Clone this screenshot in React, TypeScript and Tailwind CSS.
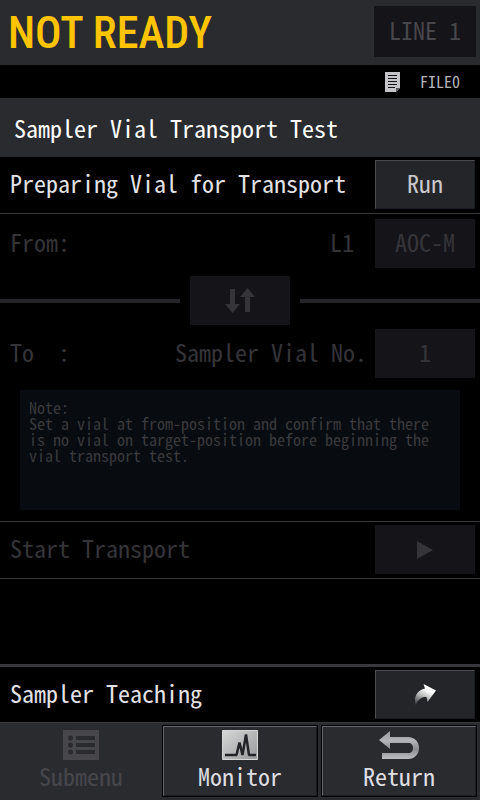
import React from 'react';
import { clsx } from 'clsx';

interface PanelButtonProps {
  children: React.ReactNode;
  label?: string;
  disabled?: boolean;
}

const PanelButton: React.FC<PanelButtonProps> = ({ children, label, disabled = false }) => (
  <button
    type="button"
    aria-label={label}
    disabled={disabled}
    className={clsx(
      'flex h-[49px] w-[100px] shrink-0 items-center justify-center border',
      disabled
        ? 'border-[#151418] bg-[#151418] text-[#353438]'
        : 'border-t-[#4c4c50] border-r-[#1a1a22] border-b-[#1a1a22] border-l-[#4c4c50] bg-[#242528] text-[#c8c8cc]'
    )}
  >
    {children}
  </button>
);

const ButtonText: React.FC<{ children: React.ReactNode }> = ({ children }) => (
  <span className="pb-1">{children}</span>
);

const DocumentIcon = () => (
  <svg width="15" height="20" viewBox="0 0 15 20" aria-hidden="true">
    <path d="M0 0h15v16l-4 4H0z" fill="#c4c4c8" />
    <path d="M11 20v-4h4z" fill="#55555a" />
    <path d="M3 3.5h9M3 6.5h9M3 9.5h9M3 12.5h9M3 15.5h7" stroke="#111" strokeWidth="1" />
  </svg>
);

const SwapIcon = () => (
  <svg width="30" height="26" viewBox="0 0 30 26" fill="#353438" aria-hidden="true">
    <path d="M5 1h5v15h5l-7.500 9L0 16h5z" />
    <path d="M20 24h5V9h5L22.500 0 15 9h5z" />
  </svg>
);

const PlayIcon = () => (
  <svg width="16" height="18" viewBox="0 0 16 18" fill="#353438" aria-hidden="true">
    <path d="M0 0l16 9-16 9z" />
  </svg>
);

const JumpIcon = () => (
  <svg width="22" height="22" viewBox="0 0 22 22" aria-hidden="true">
    <defs>
      <linearGradient id="jump" x1="0" y1="1" x2="0.5" y2="0">
        <stop offset="0" stopColor="#242528" />
        <stop offset="0.5" stopColor="#b8b8b8" />
        <stop offset="0.8" stopColor="#ffffff" />
      </linearGradient>
    </defs>
    <path d="M9.500 0L22 6.500 13.500 18l-1-5C8 12.500 4 15 1.500 21.500-.5 14 2.500 6 11 4.500z" fill="url(#jump)" />
  </svg>
);

const ListIcon = () => (
  <svg width="36" height="30" viewBox="0 0 36 30" aria-hidden="true">
    <path d="M0 0h36v30H0z" fill="#47474b" />
    <g fill="#2a2b2f">
      <circle cx="7.500" cy="8" r="2.500" />
      <circle cx="7.500" cy="15" r="2.500" />
      <circle cx="7.500" cy="22" r="2.500" />
      <path d="M13 6h19v4H13zM13 13h19v4H13zM13 20h19v4H13z" />
    </g>
  </svg>
);

const ChartIcon = () => (
  <svg width="36" height="30" viewBox="0 0 36 30" aria-hidden="true">
    <defs>
      <linearGradient id="chart" x1="0" y1="0" x2="1" y2="1">
        <stop offset="0" stopColor="#d4d8d6" />
        <stop offset="1" stopColor="#98999b" />
      </linearGradient>
    </defs>
    <path d="M.5.5h35v29H.5z" fill="url(#chart)" stroke="#d6d6d6" />
    <path
      d="M3 25h11.500l3-12.500 3 12.500 3.500-20.500L27 25h7"
      fill="none"
      stroke="#232428"
      strokeWidth="2.500"
      strokeLinejoin="bevel"
    />
  </svg>
);

const ReturnIcon = () => (
  <svg width="41" height="29" viewBox="0 0 41 29" aria-hidden="true">
    <defs>
      <linearGradient id="return" x1="0" y1="0" x2="0" y2="1">
        <stop offset="0" stopColor="#9a9b9d" />
        <stop offset="0.35" stopColor="#b4b5b7" />
        <stop offset="0.65" stopColor="#8c8d90" />
        <stop offset="1" stopColor="#bcbdbf" />
      </linearGradient>
    </defs>
    <path
      d="M0 9l11-9v6h18c7 0 11 5 11 11s-4 11-11 11H3v-6h26c3.500 0 5-2 5-5s-1.500-5-5-5H11v6z"
      fill="url(#return)"
    />
  </svg>
);

interface FooterButtonProps {
  icon: React.ReactNode;
  text: string;
  disabled?: boolean;
}

const FooterButton: React.FC<FooterButtonProps> = ({ icon, text, disabled = false }) => (
  <div className={clsx('flex-1 border', disabled ? 'border-[#2a2b2f]' : 'border-black')}>
    <button
      type="button"
      disabled={disabled}
      className={clsx(
        'flex h-[70px] w-full flex-col items-center border bg-[#2a2b2f] pt-[3px]',
        disabled
          ? 'border-[#2a2b2f] text-[#47474b]'
          : 'border-t-[#66666a] border-r-[#1c1c20] border-b-[#1c1c20] border-l-[#66666a] text-[#dedee2]'
      )}
    >
      <span className="flex h-[30px] items-center">{icon}</span>
      <span className="leading-8">{text}</span>
    </button>
  </div>
);

const App: React.FC = () => {
  return (
    <div className="flex min-h-screen flex-col bg-black font-['Noto_Sans_Mono_CJK_JP','Noto_Sans_CJK_JP',monospace] text-2xl leading-6 text-[#353438]">
      <header className="flex h-[65px] items-center justify-between bg-[#2a2b2f] pr-1 pl-2">
        <h1 className="font-['Roboto_Condensed','Liberation_Sans_Narrow','Noto_Sans_Mono_CJK_JP',monospace] text-[44px] leading-[60px] font-medium text-[#ffc400]">
          NOT READY
        </h1>
        <button type="button" disabled className="mb-0.5 h-[51px] w-[102px] bg-[#151418] pb-1 text-[#47474b]">
          LINE 1
        </button>
      </header>

      <div className="flex h-[33px] items-center justify-end gap-5 pr-5">
        <DocumentIcon />
        <span className="pb-0.5 text-base leading-4 text-[#b4b4b8]">FILE0</span>
      </div>

      <h2 className="flex h-[59px] items-center bg-[#2a2b2f] px-[14px] text-white">Sampler Vial Transport Test</h2>

      <main className="flex flex-1 flex-col">
        <section className="flex items-center justify-between border-b border-[#38383c] pt-[3px] pr-[5px] pb-1 pl-[10px]">
          <span className="pb-1 text-[#e2e2e6]">Preparing Vial for Transport</span>
          <PanelButton>
            <ButtonText>Run</ButtonText>
          </PanelButton>
        </section>

        <section className="flex items-center pt-[5px] pr-[5px] pl-[10px]">
          <span className="flex-1 pb-1">From:</span>
          <span className="pr-[21px] pb-1">L1</span>
          <PanelButton disabled>
            <ButtonText>AOC-M</ButtonText>
          </PanelButton>
        </section>

        <div className="mt-2 flex items-center gap-[10px]">
          <span className="h-1 flex-1 bg-[#252429]" />
          <PanelButton label="Swap positions" disabled>
            <SwapIcon />
          </PanelButton>
          <span className="h-1 flex-1 bg-[#252429]" />
        </div>

        <section className="mt-1 flex items-center pr-[5px] pl-[10px]">
          <span className="flex-1 pb-1 whitespace-pre">{'To  :'}</span>
          <span className="pr-2 pb-1">Sampler Vial No.</span>
          <PanelButton disabled>
            <ButtonText>1</ButtonText>
          </PanelButton>
        </section>

        <p className="mx-5 mt-3 min-h-[120px] bg-[#080b10] px-[9px] py-[9px] text-base leading-4 text-[#3a3a3c]">
          Note:
          <br />
          Set a vial at from-position and confirm that there
          <br />
          is no vial on target-position before beginning the
          <br />
          vial transport test.
        </p>

        <section className="mt-[11px] flex items-center justify-between border-y border-[#38383c] pt-[3px] pr-[5px] pb-1 pl-[10px]">
          <span className="pb-1">Start Transport</span>
          <PanelButton label="Start Transport" disabled>
            <PlayIcon />
          </PanelButton>
        </section>

        <section className="mt-auto flex items-center justify-between border-t-[3px] border-[#38383c] py-[3px] pr-[5px] pl-[10px]">
          <span className="pb-1 text-[#e2e2e6]">Sampler Teaching</span>
          <PanelButton label="Sampler Teaching">
            <JumpIcon />
          </PanelButton>
        </section>
      </main>

      <footer className="flex gap-[3px] border-t border-[#3a3a3e] bg-[#2a2b2f] px-[3px] pt-0.5 pb-[3px]">
        <FooterButton icon={<ListIcon />} text="Submenu" disabled />
        <FooterButton icon={<ChartIcon />} text="Monitor" />
        <FooterButton icon={<ReturnIcon />} text="Return" />
      </footer>
    </div>
  );
};

export default App;
